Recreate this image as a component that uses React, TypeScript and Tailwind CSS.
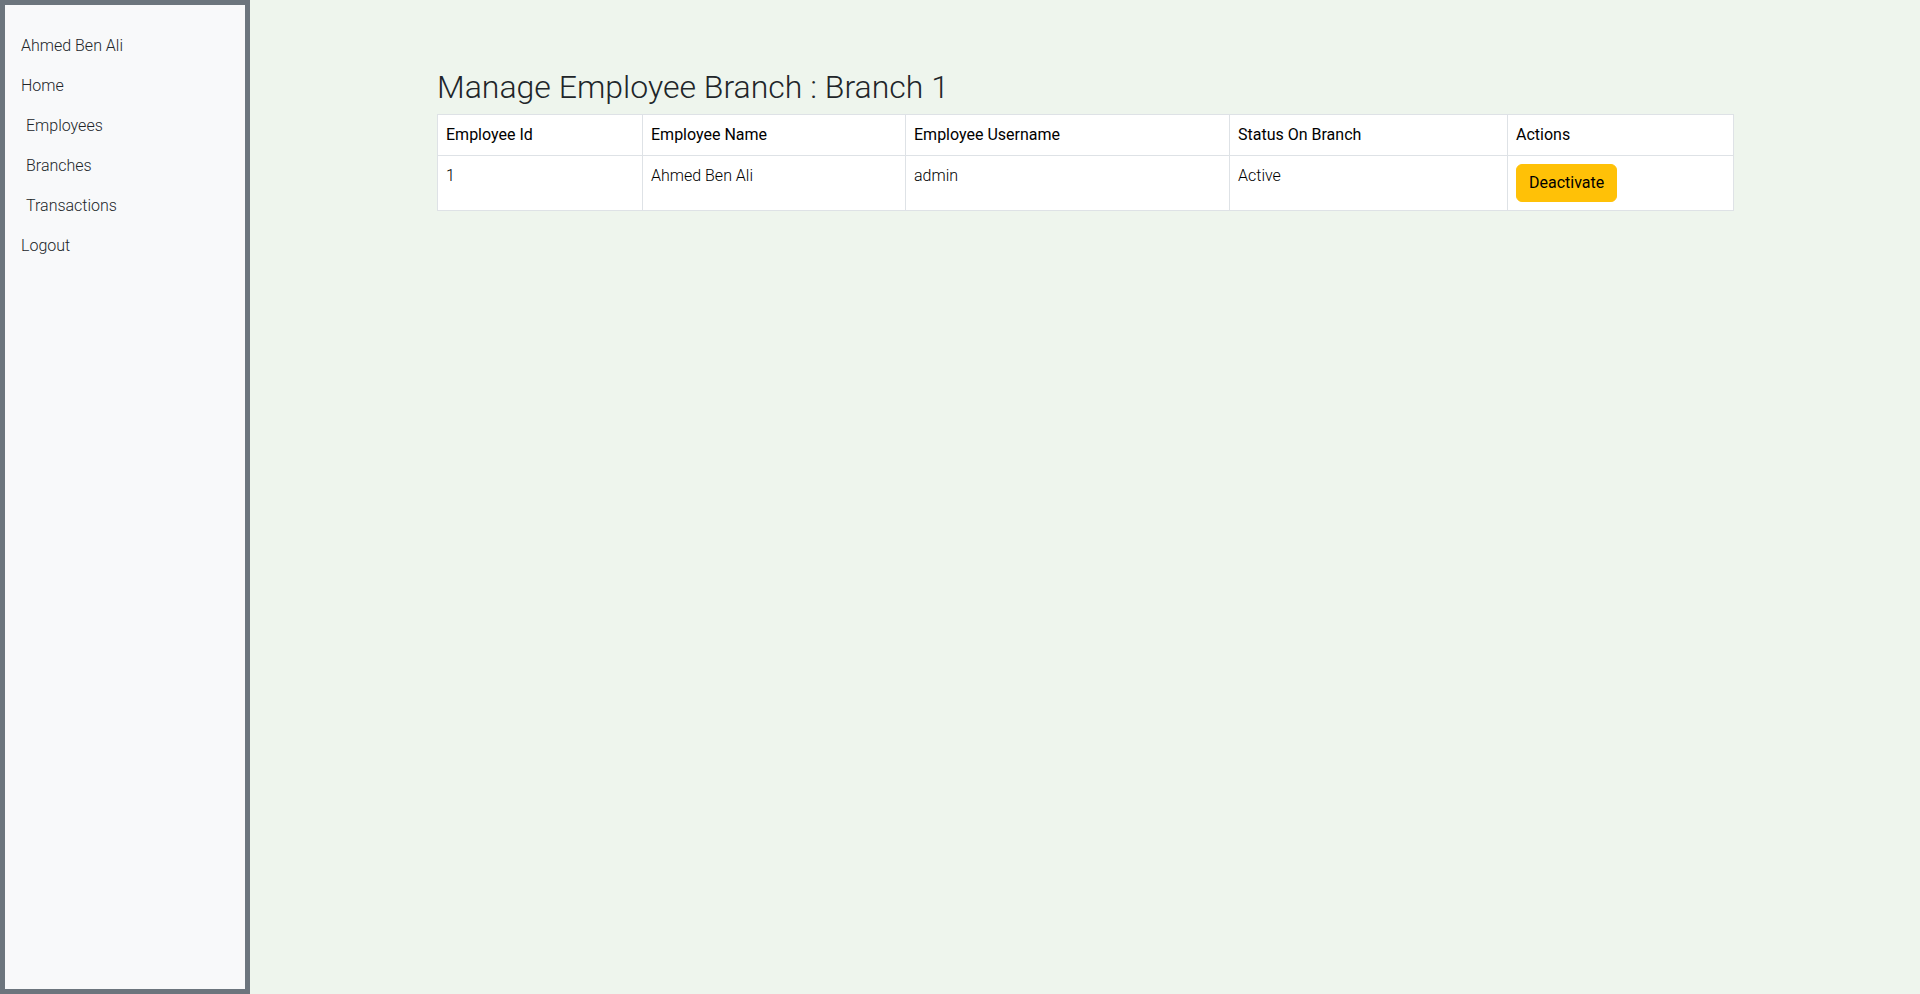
import React from "react";

const navItems: { label: string; indent: boolean }[] = [
  { label: "Ahmed Ben Ali", indent: false },
  { label: "Home", indent: false },
  { label: "Employees", indent: true },
  { label: "Branches", indent: true },
  { label: "Transactions", indent: true },
  { label: "Logout", indent: false },
];

const headers = ["Employee Id", "Employee Name", "Employee Username", "Status On Branch", "Actions"];

export default function App() {
  return (
    <div
      className="flex min-h-screen w-full bg-[#eef5ed] text-[#212529]"
      style={{ fontFamily: "Roboto, 'Liberation Sans', sans-serif" }}
    >
      <aside className="h-screen w-[250px] shrink-0 border-[5px] border-[#6c757d] bg-[#f8f9fa] pt-[21px] pl-[16px] font-light">
        <ul className="flex flex-col">
          {navItems.map((item) => (
            <li
              key={item.label}
              className={`h-[40px] py-2 text-[16px] leading-[24px] ${item.indent ? "pl-[5px]" : ""}`}
            >
              {item.label}
            </li>
          ))}
        </ul>
      </aside>
      <main className="flex-1">
        <div className="mx-auto w-[1296px] pt-[68px]">
          <h2 className="mb-[8px] text-[32px] font-light leading-[38.4px]">
            Manage Employee Branch : Branch 1
          </h2>
          <table className="w-[1296px] table-fixed border-collapse border border-[#dee2e6] bg-white text-[16px] leading-[24px] text-black">
            <colgroup>
              <col className="w-[205px]" />
              <col className="w-[263px]" />
              <col className="w-[324px]" />
              <col className="w-[278px]" />
              <col className="w-[226px]" />
            </colgroup>
            <thead>
              <tr>
                {headers.map((h) => (
                  <th
                    key={h}
                    className="border border-[#dee2e6] px-2 py-2 text-left align-top font-normal"
                  >
                    {h}
                  </th>
                ))}
              </tr>
            </thead>
            <tbody>
              <tr className="font-light">
                <td className="border border-[#dee2e6] px-2 py-2 align-top">1</td>
                <td className="border border-[#dee2e6] px-2 py-2 align-top">Ahmed Ben Ali</td>
                <td className="border border-[#dee2e6] px-2 py-2 align-top">admin</td>
                <td className="border border-[#dee2e6] px-2 py-2 align-top">Active</td>
                <td className="border border-[#dee2e6] px-2 py-2 align-top">
                  <button className="h-[38px] rounded-[6px] border border-[#ffc107] bg-[#ffc107] px-3 text-[16px] font-normal leading-[24px] text-black">
                    Deactivate
                  </button>
                </td>
              </tr>
            </tbody>
          </table>
        </div>
      </main>
    </div>
  );
}
